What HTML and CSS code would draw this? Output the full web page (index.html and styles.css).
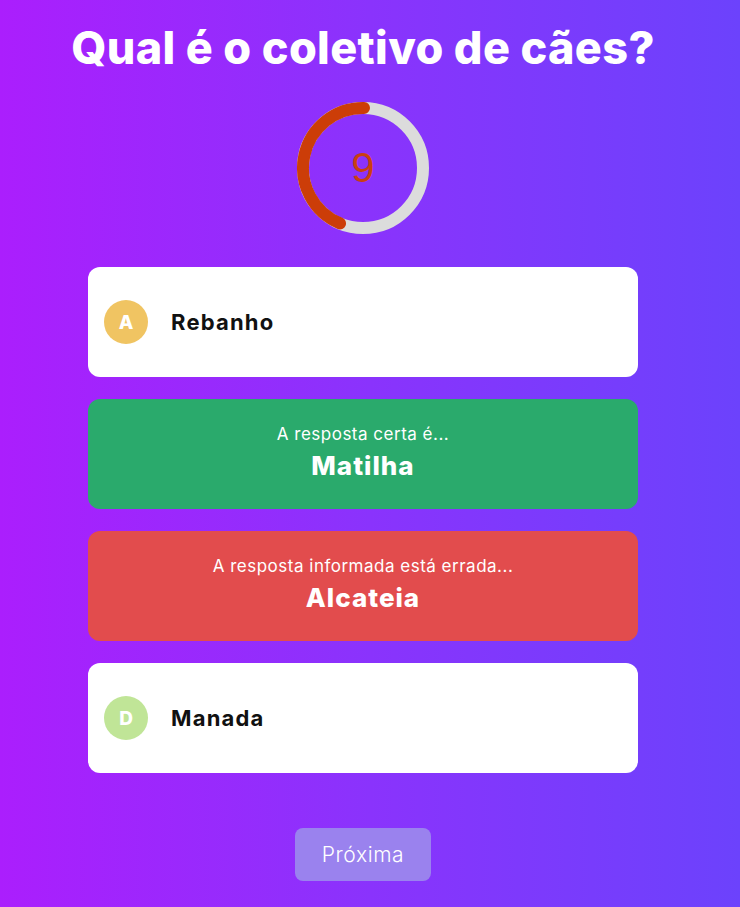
FILE: index.html
```html
<!DOCTYPE html>
<html lang="pt">
<head>
<meta charset="utf-8">
<title>Quiz</title>
<link rel="stylesheet" href="styles.css">
</head>
<body>
<main class="quiz">
  <h1 class="question">Qual é o coletivo de cães?</h1>
  <div class="timer">
    <svg class="timer-ring" width="136" height="136" viewBox="0 0 136 136">
      <circle cx="68" cy="68" r="60" fill="none" stroke="#dcdcdc" stroke-width="12"/>
      <path d="M69 8 A60 60 0 0 0 45 123.4" fill="none" stroke="#cc3d08" stroke-width="12" stroke-linecap="round"/>
    </svg>
    <span class="timer-num">9</span>
  </div>
  <div class="answers">
    <div class="card card-plain">
      <span class="badge badge-a">A</span>
      <span class="answer">Rebanho</span>
    </div>
    <div class="card card-right">
      <span class="msg">A resposta certa é...</span>
      <span class="big">Matilha</span>
    </div>
    <div class="card card-wrong">
      <span class="msg">A resposta informada está errada...</span>
      <span class="big">Alcateia</span>
    </div>
    <div class="card card-plain">
      <span class="badge badge-d">D</span>
      <span class="answer">Manada</span>
    </div>
  </div>
  <div class="actions">
    <button class="next">Próxima</button>
  </div>
</main>
</body>
</html>
```

FILE: styles.css
```css
* { box-sizing: border-box; }
html, body { margin: 0; padding: 0; }
body {
  width: 740px;
  height: 907px;
  overflow: hidden;
  background: linear-gradient(90deg, #ab1efd 0%, #8a33fc 50%, #6c42fc 100%);
  font-family: "Inter", "Open Sans", sans-serif;
}
.quiz {
  width: 550px;
  margin-left: 88px;
  display: flex;
  flex-direction: column;
  align-items: center;
}
.question {
  margin: 19px 0 0;
  color: #fff;
  font-size: 45px;
  font-weight: 800;
  line-height: 58px;
  white-space: nowrap;
  letter-spacing: 0.35px;
}
.timer {
  position: relative;
  width: 136px;
  height: 136px;
  margin-top: 23px;
}
.timer-ring { display: block; }
.timer-num {
  position: absolute;
  inset: 0;
  display: flex;
  align-items: center;
  justify-content: center;
  font-family: "Liberation Sans", sans-serif;
  font-size: 42px;
  font-weight: 300;
  color: #c93f12;
}
.answers {
  width: 550px;
  margin-top: 31px;
  display: flex;
  flex-direction: column;
  gap: 22px;
}
.card {
  height: 110px;
  border-radius: 12px;
  display: flex;
}
.card-plain {
  background: #fff;
  align-items: center;
  padding-left: 16px;
}
.badge {
  width: 44px;
  height: 44px;
  border-radius: 50%;
  display: flex;
  align-items: center;
  justify-content: center;
  color: #fff;
  font-weight: 800;
  font-size: 19px;
}
.badge-a { background: #f0c462; }
.badge-d { background: #c0e597; }
.answer {
  margin-left: 23px;
  font-size: 22px;
  font-weight: 700;
  color: #111;
  letter-spacing: 1.2px;
}
.card-right, .card-wrong {
  flex-direction: column;
  align-items: center;
  justify-content: center;
  color: #fff;
  padding-bottom: 2px;
}
.card-right { background: #2aaa6c; }
.card-wrong { background: #e24c4d; }
.msg {
  font-size: 17px;
  font-weight: 400;
  line-height: 26px;
  letter-spacing: 0.5px;
}
.big {
  font-size: 26px;
  font-weight: 800;
  line-height: 38px;
  letter-spacing: 1px;
}
.actions {
  margin-top: 55px;
  display: flex;
  justify-content: center;
  width: 100%;
}
.next {
  width: 136px;
  height: 53px;
  border: none;
  border-radius: 8px;
  background: #9a82ee;
  color: #fff;
  font-family: "Inter", sans-serif;
  font-weight: 300;
  font-size: 21px;
  letter-spacing: 0.6px;
}
```
